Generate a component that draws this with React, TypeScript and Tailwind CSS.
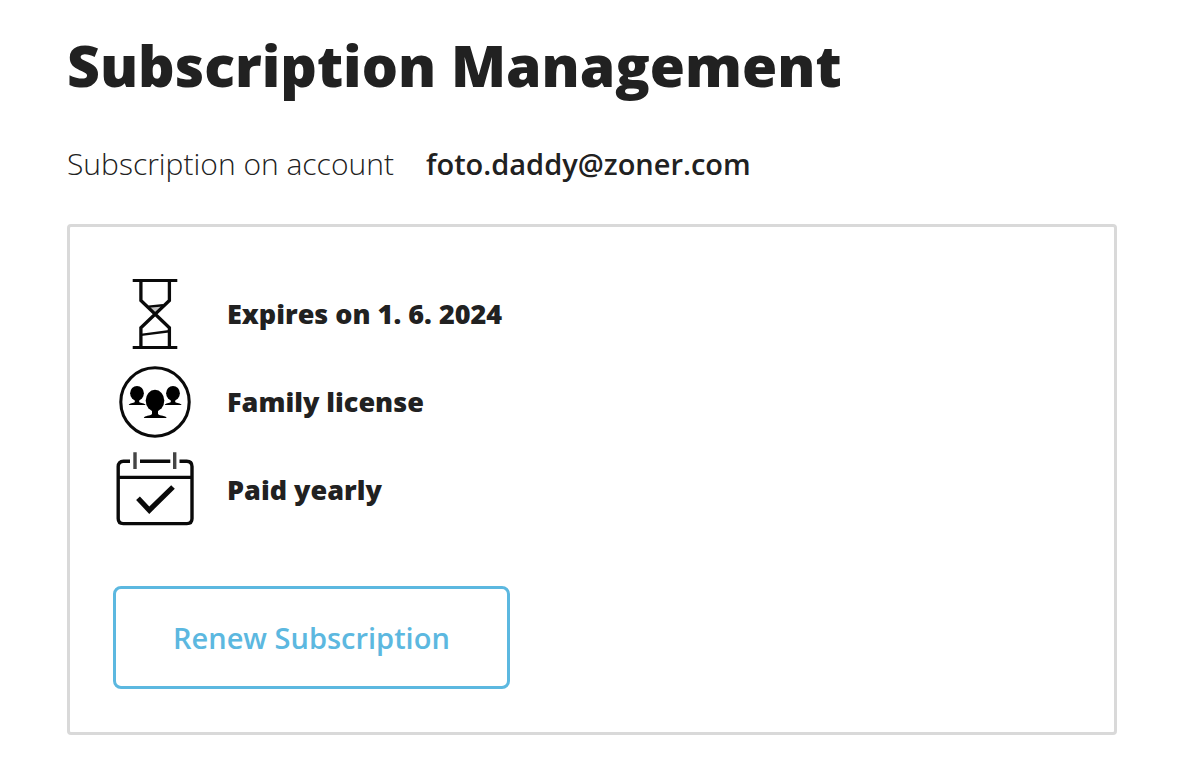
import type { ReactNode } from 'react';

function HourglassIcon() {
  return (
    <svg viewBox="0 0 84 88" className="h-[88px] w-[84px] shrink-0" fill="none" stroke="#0a0a0a" aria-hidden="true">
      <path d="M19.7 10.6H64.3M19.7 77.5H64.3" strokeWidth="3" />
      <path d="M27.9 10.3V30.5L56.4 57.7V77.3M56.4 10.3V30.5L27.9 57.7V77.3" strokeWidth="3.3" />
      <path d="M35.5 36.6L50 35.2M28 64.9L56 61.2" strokeWidth="2.4" />
      <path d="M36.5 37L49 35.5L42 41.5Z" fill="#111" fillOpacity="0.25" stroke="none" />
    </svg>
  );
}

function FamilyIcon() {
  return (
    <svg viewBox="0 0 84 88" className="h-[88px] w-[84px] shrink-0" fill="#000" aria-hidden="true">
      <circle cx="42" cy="44" r="34.2" fill="none" stroke="#0a0a0a" strokeWidth="3.1" />
      <ellipse cx="24" cy="35.3" rx="6.9" ry="7.4" />
      <path d="M21.8 40H26.2V44C27.6 45.4 32 45 32.5 47H15.8C16.4 45 20.4 45.4 21.8 44Z" />
      <ellipse cx="60" cy="35.3" rx="6.9" ry="7.4" />
      <path d="M57.8 40H62.2V44C63.6 45.4 68 45 68.5 47H51.8C52.4 45 56.4 45.4 57.8 44Z" />
      <ellipse cx="42" cy="42.6" rx="9.3" ry="10.8" />
      <path d="M39 51H45V56C46.8 58.2 53 57.4 53.7 60H30.8C31.4 57.4 37.2 58.2 39 56Z" />
    </svg>
  );
}

function CalendarIcon() {
  return (
    <svg viewBox="0 0 84 88" className="h-[88px] w-[84px] shrink-0" fill="none" stroke="#0a0a0a" aria-hidden="true">
      <path
        d="M17 15.3H10.5Q5.2 15.3 5.2 20.6V72.5Q5.2 77.6 10.3 77.6H73.9Q79 77.6 79 72.5V20.6Q79 15.3 73.7 15.3H66.5M27 15.3H57.3M5 31.4H79"
        strokeWidth="3.4"
      />
      <path d="M22 6.3V23M61.7 6.3V23" stroke="#444" strokeWidth="3.4" />
      <path d="M25 52.3L36.3 64.2L60 41" strokeWidth="5.2" />
    </svg>
  );
}

function Detail({ icon, children }: { icon: ReactNode; children: ReactNode }) {
  return (
    <li className="flex items-center gap-[30px]">
      {icon}
      <span className="text-[27px] leading-10 font-extrabold">{children}</span>
    </li>
  );
}

export default function App() {
  return (
    <main className="bg-white pt-[30px] pr-[77px] pb-7 pl-[67px] font-['Open_Sans',sans-serif] text-[#212121]">
      <h1 className="text-[57px] leading-[70px] font-extrabold">Subscription Management</h1>

      <p className="mt-11 flex flex-wrap items-baseline gap-x-8 leading-10">
        <span className="text-[30px] font-light">Subscription on account</span>
        <strong className="text-[29px] font-semibold">foto.daddy@zoner.com</strong>
      </p>

      <section className="mt-10 rounded-[4px] border-3 border-[#d9d9d9] p-[43px]">
        <ul>
          <Detail icon={<HourglassIcon />}>Expires on 1. 6. 2024</Detail>
          <Detail icon={<FamilyIcon />}>Family license</Detail>
          <Detail icon={<CalendarIcon />}>Paid yearly</Detail>
        </ul>

        <button
          type="button"
          className="mt-[52px] block cursor-pointer rounded-lg border-3 border-[#5cb8e0] px-[57px] py-7 text-[29px] leading-[41px] font-semibold text-[#5cb8e0]"
        >
          Renew Subscription
        </button>
      </section>
    </main>
  );
}
